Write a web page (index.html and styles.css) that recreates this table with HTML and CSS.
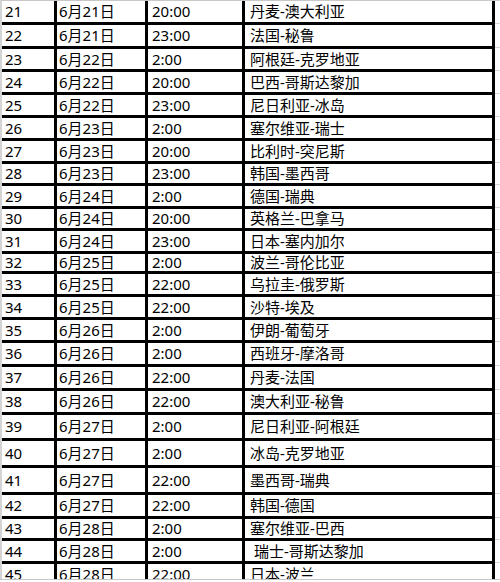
FILE: index.html
```html
<!DOCTYPE html>
<html lang="zh-CN">
<head>
<meta charset="utf-8">
<title>赛程</title>
<link rel="stylesheet" href="styles.css">
</head>
<body>
<div class="viewport">
  <div class="sheet">
    <div class="c n">21</div><div class="c d">6月21日</div><div class="c t">20:00</div><div class="c m">丹麦-澳大利亚</div><div class="g"></div>
    <div class="c n">22</div><div class="c d">6月21日</div><div class="c t">23:00</div><div class="c m">法国-秘鲁</div><div class="g"></div>
    <div class="c n">23</div><div class="c d">6月22日</div><div class="c t">2:00</div><div class="c m">阿根廷-克罗地亚</div><div class="g"></div>
    <div class="c n">24</div><div class="c d">6月22日</div><div class="c t">20:00</div><div class="c m">巴西-哥斯达黎加</div><div class="g"></div>
    <div class="c n">25</div><div class="c d">6月22日</div><div class="c t">23:00</div><div class="c m">尼日利亚-冰岛</div><div class="g"></div>
    <div class="c n">26</div><div class="c d">6月23日</div><div class="c t">2:00</div><div class="c m">塞尔维亚-瑞士</div><div class="g"></div>
    <div class="c n">27</div><div class="c d">6月23日</div><div class="c t">20:00</div><div class="c m">比利时-突尼斯</div><div class="g"></div>
    <div class="c n">28</div><div class="c d">6月23日</div><div class="c t">23:00</div><div class="c m">韩国-墨西哥</div><div class="g"></div>
    <div class="c n">29</div><div class="c d">6月24日</div><div class="c t">2:00</div><div class="c m">德国-瑞典</div><div class="g"></div>
    <div class="c n">30</div><div class="c d">6月24日</div><div class="c t">20:00</div><div class="c m">英格兰-巴拿马</div><div class="g"></div>
    <div class="c n">31</div><div class="c d">6月24日</div><div class="c t">23:00</div><div class="c m">日本-塞内加尔</div><div class="g"></div>
    <div class="c n">32</div><div class="c d">6月25日</div><div class="c t">2:00</div><div class="c m">波兰-哥伦比亚</div><div class="g"></div>
    <div class="c n">33</div><div class="c d">6月25日</div><div class="c t">22:00</div><div class="c m">乌拉圭-俄罗斯</div><div class="g"></div>
    <div class="c n">34</div><div class="c d">6月25日</div><div class="c t">22:00</div><div class="c m">沙特-埃及</div><div class="g"></div>
    <div class="c n">35</div><div class="c d">6月26日</div><div class="c t">2:00</div><div class="c m">伊朗-葡萄牙</div><div class="g"></div>
    <div class="c n">36</div><div class="c d">6月26日</div><div class="c t">2:00</div><div class="c m">西班牙-摩洛哥</div><div class="g"></div>
    <div class="c n">37</div><div class="c d">6月26日</div><div class="c t">22:00</div><div class="c m">丹麦-法国</div><div class="g"></div>
    <div class="c n">38</div><div class="c d">6月26日</div><div class="c t">22:00</div><div class="c m">澳大利亚-秘鲁</div><div class="g"></div>
    <div class="c n">39</div><div class="c d">6月27日</div><div class="c t">2:00</div><div class="c m">尼日利亚-阿根廷</div><div class="g"></div>
    <div class="c n">40</div><div class="c d">6月27日</div><div class="c t">2:00</div><div class="c m">冰岛-克罗地亚</div><div class="g"></div>
    <div class="c n">41</div><div class="c d">6月27日</div><div class="c t">22:00</div><div class="c m">墨西哥-瑞典</div><div class="g"></div>
    <div class="c n">42</div><div class="c d">6月27日</div><div class="c t">22:00</div><div class="c m">韩国-德国</div><div class="g"></div>
    <div class="c n">43</div><div class="c d">6月28日</div><div class="c t">2:00</div><div class="c m">塞尔维亚-巴西</div><div class="g"></div>
    <div class="c n">44</div><div class="c d">6月28日</div><div class="c t">2:00</div><div class="c m lead">瑞士-哥斯达黎加</div><div class="g"></div>
    <div class="c n">45</div><div class="c d">6月28日</div><div class="c t">22:00</div><div class="c m">日本-波兰</div><div class="g"></div>
  </div>
</div>
</body>
</html>
```

FILE: styles.css
```css
html, body {
  margin: 0;
  padding: 0;
  background: #ffffff;
}

body {
  width: 500px;
  height: 582px;
  overflow: hidden;
  font-family: "Noto Sans", "Noto Sans CJK SC", sans-serif;
  font-size: 15px;
  color: #000000;
}

.viewport {
  height: 579px;
  overflow: hidden;
  border-bottom: 1px solid #c6c6c6;
}

.sheet {
  display: grid;
  grid-template-columns: 55px 91px 97px 250px 5px;
  grid-template-rows:
    24px 24px 23px 23px 23px
    23px 23px 22px 23px 22px
    23px 20px 23px 23px 23px
    24px 24px 24px 26px 27px
    27px 24px 22px 23px 24px;
  border-top: 1px solid #c8c8c8;
  border-left: 2px solid #d4d4d4;
}

.c {
  box-sizing: border-box;
  border-right: 3px solid #000000;
  border-bottom: 3px solid #000000;
  display: flex;
  align-items: center;
  white-space: nowrap;
  line-height: 1;
}

.n { padding-left: 3px; }
.d { padding-left: 2px; }
.t { padding-left: 4px; }
.m { padding-left: 5px; }
.m.lead { padding-left: 9px; }

.g {
  box-sizing: border-box;
  border-bottom: 1px solid #d4d4d4;
  margin-bottom: 1px;
}
```
